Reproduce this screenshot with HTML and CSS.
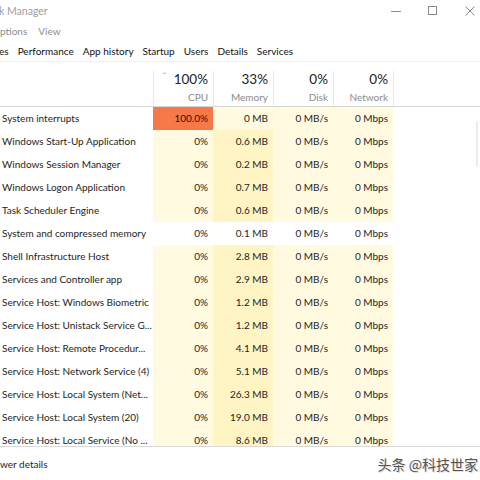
FILE: index.html
```html
<!DOCTYPE html>
<html>
<head>
    <title>Task Manager</title>
    <meta charset="UTF-8">
    <link rel="stylesheet" href="styles.css">
</head>
<body>
<div class="window">
    <div class="titlebar">
        <div class="title">k Manager</div>
        <div class="controls">
            <svg class="ctl" width="12" height="12" viewBox="0 0 12 12"><path d="M1 6.5h10" stroke="#8a8a8a" stroke-width="1" fill="none"/></svg>
            <svg class="ctl" width="12" height="12" viewBox="0 0 12 12"><rect x="1.5" y="1.5" width="8" height="8" stroke="#8a8a8a" stroke-width="1" fill="none"/></svg>
            <svg class="ctl" width="12" height="12" viewBox="0 0 12 12"><path d="M1.5 1.5l9 9M10.5 1.5l-9 9" stroke="#8a8a8a" stroke-width="1" fill="none"/></svg>
        </div>
    </div>

    <div class="menubar">
        <span>ptions</span>
        <span>View</span>
    </div>

    <div class="tabs">
        <span class="tab">es</span>
        <span class="tab">Performance</span>
        <span class="tab">App history</span>
        <span class="tab">Startup</span>
        <span class="tab">Users</span>
        <span class="tab">Details</span>
        <span class="tab">Services</span>
    </div>

    <div class="grid head">
        <div class="hcell name"></div>
        <div class="hcell col">
            <span class="sort">&#711;</span>
            <span class="pct">100%</span>
            <span class="label">CPU</span>
        </div>
        <div class="hcell col"><span class="pct">33%</span><span class="label">Memory</span></div>
        <div class="hcell col"><span class="pct">0%</span><span class="label">Disk</span></div>
        <div class="hcell col"><span class="pct">0%</span><span class="label">Network</span></div>
        <div class="hcell rest"></div>
    </div>

    <div class="rows">
        <div class="grid row">
            <div class="name">System interrupts</div>
            <div class="cell hot">100.0%</div>
            <div class="cell pale">0 MB</div>
            <div class="cell pale">0 MB/s</div>
            <div class="cell pale">0 Mbps</div>
            <div></div>
        </div>
        <div class="grid row">
            <div class="name">Windows Start-Up Application</div>
            <div class="cell pale">0%</div>
            <div class="cell warm">0.6 MB</div>
            <div class="cell pale">0 MB/s</div>
            <div class="cell pale">0 Mbps</div>
            <div></div>
        </div>
        <div class="grid row">
            <div class="name">Windows Session Manager</div>
            <div class="cell pale">0%</div>
            <div class="cell warm">0.2 MB</div>
            <div class="cell pale">0 MB/s</div>
            <div class="cell pale">0 Mbps</div>
            <div></div>
        </div>
        <div class="grid row">
            <div class="name">Windows Logon Application</div>
            <div class="cell pale">0%</div>
            <div class="cell warm">0.7 MB</div>
            <div class="cell pale">0 MB/s</div>
            <div class="cell pale">0 Mbps</div>
            <div></div>
        </div>
        <div class="grid row">
            <div class="name">Task Scheduler Engine</div>
            <div class="cell pale">0%</div>
            <div class="cell warm">0.6 MB</div>
            <div class="cell pale">0 MB/s</div>
            <div class="cell pale">0 Mbps</div>
            <div></div>
        </div>
        <div class="grid row">
            <div class="name">System and compressed memory</div>
            <div class="cell">0%</div>
            <div class="cell">0.1 MB</div>
            <div class="cell">0 MB/s</div>
            <div class="cell">0 Mbps</div>
            <div></div>
        </div>
        <div class="grid row">
            <div class="name">Shell Infrastructure Host</div>
            <div class="cell pale">0%</div>
            <div class="cell warm">2.8 MB</div>
            <div class="cell pale">0 MB/s</div>
            <div class="cell pale">0 Mbps</div>
            <div></div>
        </div>
        <div class="grid row">
            <div class="name">Services and Controller app</div>
            <div class="cell pale">0%</div>
            <div class="cell warm">2.9 MB</div>
            <div class="cell pale">0 MB/s</div>
            <div class="cell pale">0 Mbps</div>
            <div></div>
        </div>
        <div class="grid row">
            <div class="name">Service Host: Windows Biometric</div>
            <div class="cell pale">0%</div>
            <div class="cell warm">1.2 MB</div>
            <div class="cell pale">0 MB/s</div>
            <div class="cell pale">0 Mbps</div>
            <div></div>
        </div>
        <div class="grid row">
            <div class="name">Service Host: Unistack Service G...</div>
            <div class="cell pale">0%</div>
            <div class="cell warm">1.2 MB</div>
            <div class="cell pale">0 MB/s</div>
            <div class="cell pale">0 Mbps</div>
            <div></div>
        </div>
        <div class="grid row">
            <div class="name">Service Host: Remote Procedur...</div>
            <div class="cell pale">0%</div>
            <div class="cell warm">4.1 MB</div>
            <div class="cell pale">0 MB/s</div>
            <div class="cell pale">0 Mbps</div>
            <div></div>
        </div>
        <div class="grid row">
            <div class="name">Service Host: Network Service (4)</div>
            <div class="cell pale">0%</div>
            <div class="cell warm">5.1 MB</div>
            <div class="cell pale">0 MB/s</div>
            <div class="cell pale">0 Mbps</div>
            <div></div>
        </div>
        <div class="grid row">
            <div class="name">Service Host: Local System (Net...</div>
            <div class="cell pale">0%</div>
            <div class="cell warm">26.3 MB</div>
            <div class="cell pale">0 MB/s</div>
            <div class="cell pale">0 Mbps</div>
            <div></div>
        </div>
        <div class="grid row">
            <div class="name">Service Host: Local System (20)</div>
            <div class="cell pale">0%</div>
            <div class="cell warm">19.0 MB</div>
            <div class="cell pale">0 MB/s</div>
            <div class="cell pale">0 Mbps</div>
            <div></div>
        </div>
        <div class="grid row">
            <div class="name">Service Host: Local Service (No ...</div>
            <div class="cell pale">0%</div>
            <div class="cell warm">8.6 MB</div>
            <div class="cell pale">0 MB/s</div>
            <div class="cell pale">0 Mbps</div>
            <div></div>
        </div>
        <div class="scrollbar"></div>
    </div>

    <div class="footer">
        <span>wer details</span>
        <span class="mark">头条 @科技世家</span>
    </div>
</div>
</body>
</html>
```

FILE: styles.css
```css
body {
    margin: 0;
    background: #fff;
    font-family: Lato, "Liberation Sans", sans-serif;
    font-size: 10px;
    color: #1e1e1e;
}
.window {
    width: 480px;
    height: 480px;
    overflow: hidden;
    display: flex;
    flex-direction: column;
}
.titlebar {
    height: 21px;
    display: flex;
    justify-content: space-between;
    align-items: center;
}
.title {
    color: #a0a0a0;
    font-size: 10.5px;
    margin-left: -1px;
}
.controls {
    display: flex;
    gap: 25px;
    padding-right: 4px;
    padding-top: 1px;
}
.menubar {
    height: 20px;
    display: flex;
    align-items: center;
    gap: 11px;
    color: #8c8c8c;
}
.tabs {
    height: 20px;
    display: flex;
    align-items: center;
    gap: 9px;
    border-bottom: 1px solid #f0f0f0;
    color: #111;
}
.tab:first-child {
    margin-left: -1px;
}
.grid {
    display: grid;
    grid-template-columns: 153px 60px 60px 60px 60px 1fr;
}
.head {
    height: 45px;
    border-bottom: 1px solid #d6d6d6;
    box-sizing: border-box;
    padding-top: 9px;
}
.hcell.col,
.hcell.rest {
    border-left: 1px solid #e8e8e8;
}
.hcell.rest {
    width: 0;
}
.hcell.col {
    position: relative;
    display: flex;
    flex-direction: column;
    align-items: flex-end;
    padding-right: 5px;
}
.pct {
    font-size: 13.5px;
    line-height: 17px;
    color: #222;
}
.label {
    font-size: 10px;
    color: #8a8a8a;
    line-height: 18px;
}
.sort {
    position: absolute;
    left: 8px;
    top: -2px;
    font-size: 12px;
    color: #aaa;
}
.rows {
    position: relative;
    height: 339px;
    overflow: hidden;
}
.row {
    height: 23px;
    align-items: stretch;
}
.row .name {
    padding-left: 2px;
    line-height: 23px;
    white-space: nowrap;
}
.cell {
    text-align: right;
    padding-right: 5px;
    line-height: 23px;
}
.pale {
    background-color: #fffae0;
}
.warm {
    background-color: #fff4c4;
}
.hot {
    background-color: #f7794a;
    color: #3a0e00;
}
.scrollbar {
    position: absolute;
    right: 2px;
    top: 14px;
    width: 2px;
    height: 46px;
    background: #ececec;
}
.footer {
    flex: 1;
    border-top: 1px solid #d9d9d9;
    display: flex;
    justify-content: space-between;
    align-items: center;
}
.mark {
    font-family: "Noto Sans CJK SC", sans-serif;
    font-size: 14px;
    color: #555;
    margin-right: 2px;
    text-shadow: 1px 1px 0 #ddd;
}
```
